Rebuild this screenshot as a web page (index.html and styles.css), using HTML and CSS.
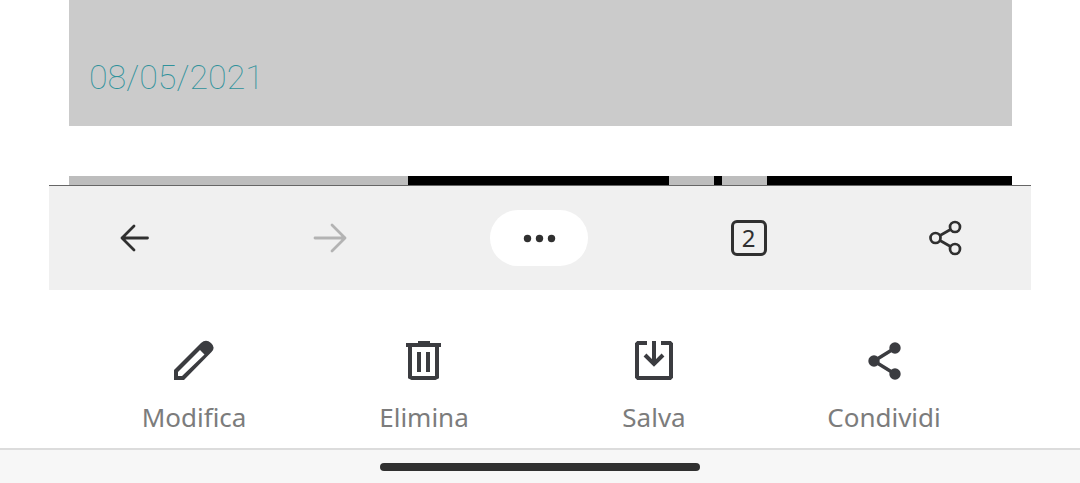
FILE: index.html
```html
<!DOCTYPE html>
<html lang="it">
<head>
    <meta charset="UTF-8">
    <meta name="viewport" content="width=device-width, initial-scale=1.0">
    <title>Screenshot</title>
    <link rel="stylesheet" href="styles.css">
</head>
<body>
    <main class="preview">
        <div class="page">
            <div class="card">
                <time class="date" datetime="2021-05-08">08/05/2021</time>
            </div>
            <div class="strip">
                <span class="light wide"></span>
                <span class="dark medium"></span>
                <span class="light small"></span>
                <span class="dark thin"></span>
                <span class="light small"></span>
                <span class="dark last"></span>
            </div>
        </div>
        <nav class="toolbar">
            <button type="button" aria-label="Indietro">
                <svg width="40" height="40" viewBox="0 0 40 40" fill="none" stroke="#303030" stroke-width="2.8" stroke-linecap="round" stroke-linejoin="round"><path d="M33.500 20H8M20 8L8 20l12 12"/></svg>
            </button>
            <button type="button" aria-label="Avanti" disabled>
                <svg width="40" height="40" viewBox="0 0 40 40" fill="none" stroke="#b3b3b3" stroke-width="2.8" stroke-linecap="round" stroke-linejoin="round"><path d="M5 20h30M22 7l13 13-13 13"/></svg>
            </button>
            <button type="button" class="more" aria-label="Altro">
                <svg width="40" height="40" viewBox="0 0 40 40" fill="#303030"><circle cx="8.500" cy="20.500" r="3.700"/><circle cx="20.500" cy="20.500" r="3.700"/><circle cx="32.500" cy="20.500" r="3.700"/></svg>
            </button>
            <button type="button" aria-label="Schede aperte: 2"><span class="tabs">2</span></button>
            <button type="button" aria-label="Condividi pagina">
                <svg width="40" height="40" viewBox="0 0 40 40" fill="none" stroke="#303030" stroke-width="2.7"><circle cx="11.5" cy="20" r="5"/><circle cx="31" cy="9" r="5"/><circle cx="31" cy="31" r="5"/><path d="M16 17.5l10.5-6M16 22.5l10.5 6"/></svg>
            </button>
        </nav>
    </main>

    <div class="actions">
        <button type="button">
            <svg width="42" height="42" viewBox="0 0 42 42" fill="#3b3c40"><path fill-rule="evenodd" d="M1 30L28 3Q33-1.500 38 3T38.500 12L11 40H1zM5 32v4h4L31.500 14.500 27 10z"/></svg>
            <span>Modifica</span>
        </button>
        <button type="button">
            <svg width="42" height="42" viewBox="0 0 42 42" fill="none" stroke="#3b3c40" stroke-width="4"><path d="M3 5h35M15 3h12M7 5v32l2 1h23l2-1V5M16 12v20M25 12v20"/></svg>
            <span>Elimina</span>
        </button>
        <button type="button">
            <svg width="42" height="42" viewBox="0 0 42 42" fill="none" stroke="#3b3c40" stroke-width="4"><path d="M14 3H5L4 4v33l1 1h32l1-1V4l-1-1h-9M21 1v24M12 15l9 9 9-9"/></svg>
            <span>Salva</span>
        </button>
        <button type="button">
            <svg width="42" height="42" viewBox="0 0 42 42" fill="#3b3c40"><circle cx="11" cy="21" r="5.7"/><circle cx="32" cy="8" r="5.7"/><circle cx="32" cy="34" r="5.7"/><path d="M32 8L11 21l21 13" fill="none" stroke="#3b3c40" stroke-width="3.5"/></svg>
            <span>Condividi</span>
        </button>
    </div>

    <footer class="system-bar">
        <div class="home"></div>
    </footer>
</body>
</html>
```
FILE: styles.css
```css
* {
    box-sizing: border-box;
}

body {
    margin: 0;
    min-height: 100vh;
    display: flex;
    flex-direction: column;
    background-color: #fff;
    font-family: "Noto Sans", sans-serif;
}

button {
    padding: 0;
    border: none;
    background: none;
    font-family: inherit;
    cursor: pointer;
}

svg {
    display: block;
}

/* captured page */
.preview {
    margin: 0 49px;
}

.page {
    padding: 0 19px 0 20px;
}

.card {
    margin-bottom: 50px;
    padding: 57px 20px 29px;
    background-color: #cbcbcb;
}

.date {
    display: block;
    font-family: Roboto, sans-serif;
    font-size: 34px;
    font-weight: 100;
    line-height: 40px;
    color: #2f929b;
}

.strip {
    display: flex;
    height: 9px;
}

.light {
    background-color: #bdbdbd;
}

.dark {
    background-color: #000;
}

.wide {
    flex: 339;
}

.medium {
    flex: 261;
}

.small {
    flex: 45;
}

.thin {
    flex: 8;
}

.last {
    flex: 245;
}

/* browser toolbar */
.toolbar {
    display: flex;
    justify-content: space-between;
    padding: 24px 52px 24px 50px;
    border-top: 1px solid #666;
    background-color: #f0f0f0;
}

.toolbar button {
    display: flex;
    align-items: center;
    justify-content: center;
    width: 70px;
    height: 56px;
}

.toolbar .more {
    width: 98px;
    border-radius: 28px;
    background-color: #fff;
}

.tabs {
    width: 36px;
    height: 36px;
    border: 3px solid #303030;
    border-radius: 6px;
    font-size: 24px;
    line-height: 30px;
    text-align: center;
    color: #303030;
}

/* bottom actions */
.actions {
    display: grid;
    grid-template-columns: repeat(4, 1fr);
    padding: 50px 81px 13px 79px;
}

.actions button {
    display: flex;
    flex-direction: column;
    align-items: center;
    gap: 17px;
    font-size: 26px;
    line-height: 36px;
    color: #7c7c7c;
}

.system-bar {
    flex: 1;
    padding: 13px 0 12px;
    border-top: 2px solid #dcdcdc;
    background-color: #f7f7f7;
}

.home {
    width: 320px;
    height: 8px;
    margin: 0 auto;
    border-radius: 4px;
    background-color: #303030;
}
```
